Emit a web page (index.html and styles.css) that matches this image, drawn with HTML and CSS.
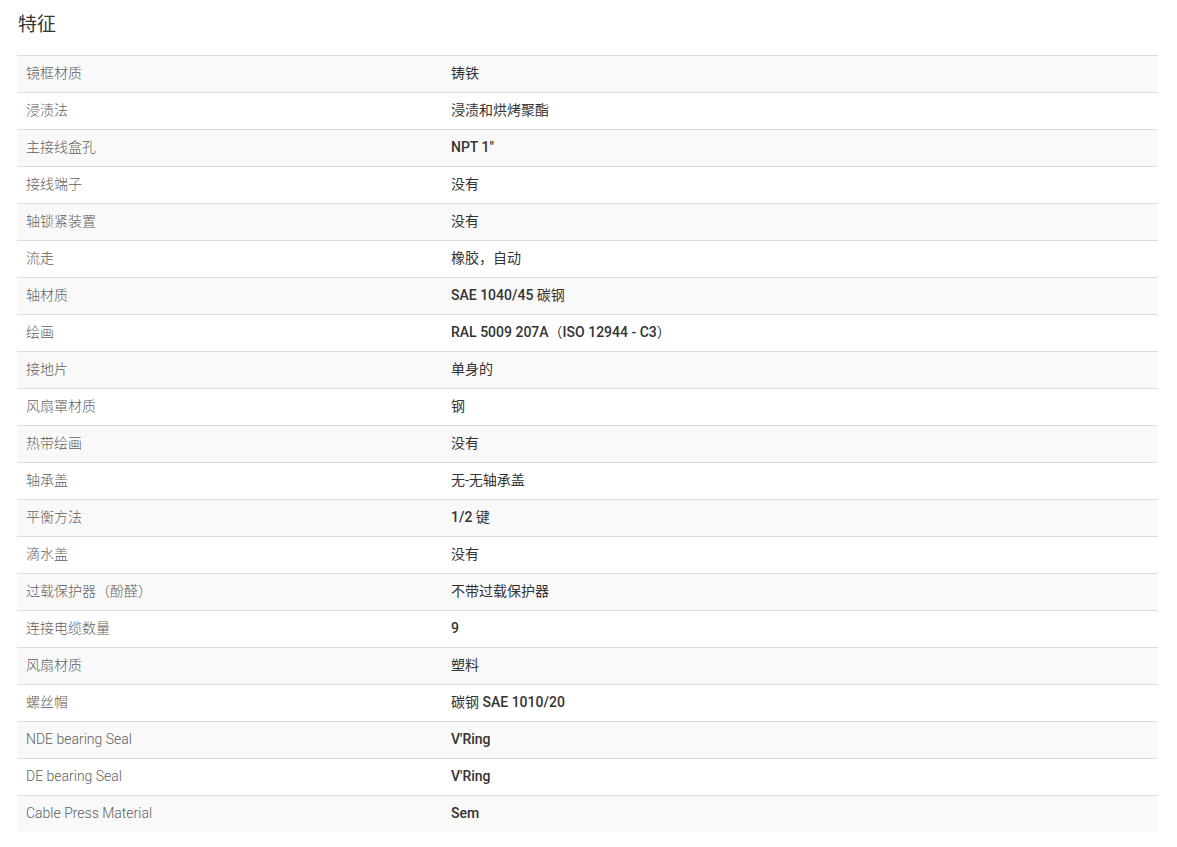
FILE: index.html
```html
<!DOCTYPE html>
<html lang="zh">
<head>
<meta charset="utf-8">
<title>特征</title>
<link rel="stylesheet" href="styles.css">
</head>
<body>
<div class="page">
  <h2 class="title">特征</h2>
  <table class="spec">
    <tbody>
      <tr><td class="k">镜框材质</td><td class="v"><span class="c">铸铁</span></td></tr>
      <tr><td class="k">浸渍法</td><td class="v"><span class="c">浸渍和烘烤聚酯</span></td></tr>
      <tr><td class="k">主接线盒孔</td><td class="v">NPT 1"</td></tr>
      <tr><td class="k">接线端子</td><td class="v"><span class="c">没有</span></td></tr>
      <tr><td class="k">轴锁紧装置</td><td class="v"><span class="c">没有</span></td></tr>
      <tr><td class="k">流走</td><td class="v"><span class="c">橡胶，自动</span></td></tr>
      <tr><td class="k">轴材质</td><td class="v">SAE 1040/45 <span class="c">碳钢</span></td></tr>
      <tr><td class="k">绘画</td><td class="v">RAL 5009 207A<span class="c">（</span>ISO 12944 - C3<span class="c">）</span></td></tr>
      <tr><td class="k">接地片</td><td class="v"><span class="c">单身的</span></td></tr>
      <tr><td class="k">风扇罩材质</td><td class="v"><span class="c">钢</span></td></tr>
      <tr><td class="k">热带绘画</td><td class="v"><span class="c">没有</span></td></tr>
      <tr><td class="k">轴承盖</td><td class="v"><span class="c">无-无轴承盖</span></td></tr>
      <tr><td class="k">平衡方法</td><td class="v">1/2 <span class="c">键</span></td></tr>
      <tr><td class="k">滴水盖</td><td class="v"><span class="c">没有</span></td></tr>
      <tr><td class="k">过载保护器（酚醛）</td><td class="v"><span class="c">不带过载保护器</span></td></tr>
      <tr><td class="k">连接电缆数量</td><td class="v">9</td></tr>
      <tr><td class="k">风扇材质</td><td class="v"><span class="c">塑料</span></td></tr>
      <tr><td class="k">螺丝帽</td><td class="v"><span class="c">碳钢</span> SAE 1010/20</td></tr>
      <tr><td class="k">NDE bearing Seal</td><td class="v">V'Ring</td></tr>
      <tr><td class="k">DE bearing Seal</td><td class="v">V'Ring</td></tr>
      <tr><td class="k">Cable Press Material</td><td class="v">Sem</td></tr>
    </tbody>
  </table>
</div>
</body>
</html>
```
FILE: styles.css
```css
html, body {
  margin: 0;
  padding: 0;
  background: #fff;
}
body {
  font-family: Roboto, "Noto Sans CJK SC", sans-serif;
  color: #333;
}
.page {
  padding: 12px 19px 0 17px;
}
.title {
  margin: 0 0 18px 1px;
  font-size: 19px;
  font-weight: 400;
  line-height: 25px;
  color: #333;
}
.spec {
  width: 100%;
  border-collapse: collapse;
  font-size: 14px;
}
.spec tr {
  border-top: 1px solid #dedede;
}
.spec tr:nth-child(odd) {
  background: #f9f9f9;
}
.spec td {
  height: 34px;
  padding: 0 9px 2px;
  vertical-align: middle;
  line-height: 20px;
}
.spec .k {
  width: 407px;
  color: #5e5e5e;
  font-weight: 300;
}
.spec .v {
  color: #333;
  font-weight: 500;
}
.spec .v .c {
  font-weight: 400;
}
```
